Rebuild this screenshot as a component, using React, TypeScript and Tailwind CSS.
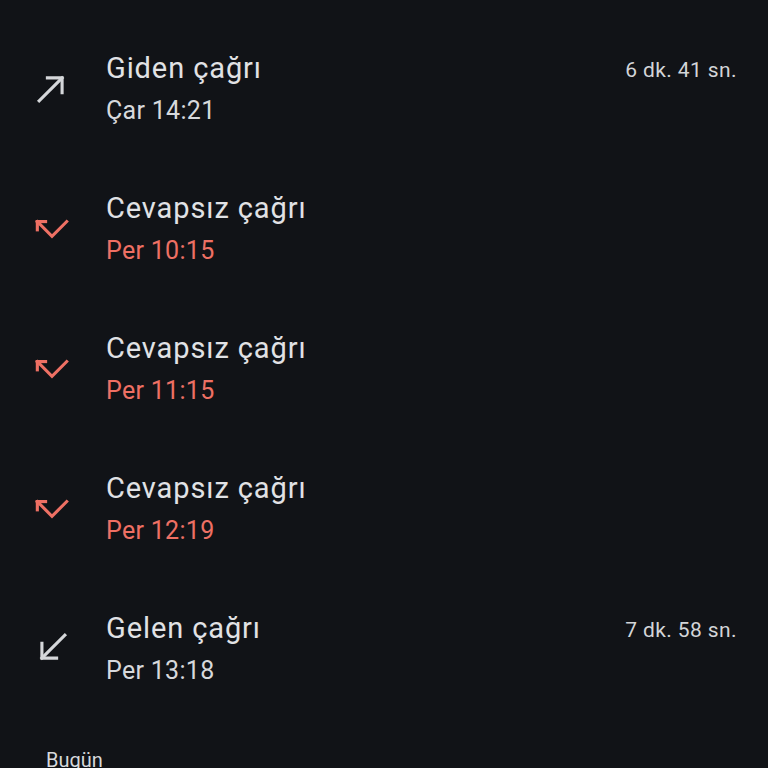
import React from "react";

type Kind = "out" | "missed" | "in";

type Call = {
  kind: Kind;
  title: string;
  time: string;
  duration?: string;
};

const calls: Call[] = [
  { kind: "out", title: "Giden çağrı", time: "Çar 14:21", duration: "6 dk. 41 sn." },
  { kind: "missed", title: "Cevapsız çağrı", time: "Per 10:15" },
  { kind: "missed", title: "Cevapsız çağrı", time: "Per 11:15" },
  { kind: "missed", title: "Cevapsız çağrı", time: "Per 12:19" },
  { kind: "in", title: "Gelen çağrı", time: "Per 13:18", duration: "7 dk. 58 sn." },
];

function CallIcon({ kind }: { kind: Kind }) {
  const color = kind === "missed" ? "#ee7064" : "#d5d7da";
  return (
    <svg width="44" height="44" viewBox="0 0 24 24" fill="none" stroke={color} strokeWidth="1.7" strokeLinecap="square">
      {kind === "out" && (
        <>
          <path d="M5 19L17.5 6.5" />
          <path d="M9.5 6.5H17.5V14.5" />
        </>
      )}
      {kind === "in" && (
        <>
          <path d="M19 5L6.5 17.5" />
          <path d="M6.5 9.5V17.5H14.5" />
        </>
      )}
      {kind === "missed" && (
        <>
          <path d="M4 8.5L12 16.5L20 8.5" />
          <path d="M4 8.5V13" />
          <path d="M4 8.5H8.5" />
        </>
      )}
    </svg>
  );
}

export default function App() {
  return (
    <div className="w-[768px] h-[768px] overflow-hidden bg-[#111317] font-['Roboto',sans-serif]">
      <div className="pt-[18px]">
        {calls.map((c, i) => (
          <div key={i} className="flex items-center h-[140px] pl-[30px] pr-[31px]">
            <div className="w-[44px] flex justify-center">
              <CallIcon kind={c.kind} />
            </div>
            <div className="ml-[32px] flex-1 flex flex-col gap-[9px] mt-[1px]">
              <div className="flex items-start justify-between">
                <span className="text-[29px] leading-[36px] tracking-[0.9px] text-[#e1e2e5]">{c.title}</span>
                {c.duration && (
                  <span className="text-[21px] leading-[28px] tracking-[0.4px] mt-[6px] text-[#d3d5d8]">{c.duration}</span>
                )}
              </div>
              <span
                className={
                  c.kind === "missed"
                    ? "text-[25px] leading-[32px] tracking-[0.3px] text-[#ee7064]"
                    : "text-[25px] leading-[32px] tracking-[0.3px] text-[#d7d9dc]"
                }
              >
                {c.time}
              </span>
            </div>
          </div>
        ))}
        <div className="pl-[46px] pt-[28px] text-[20px] leading-[28px] text-[#d7d9dc]">Bugün</div>
      </div>
    </div>
  );
}
